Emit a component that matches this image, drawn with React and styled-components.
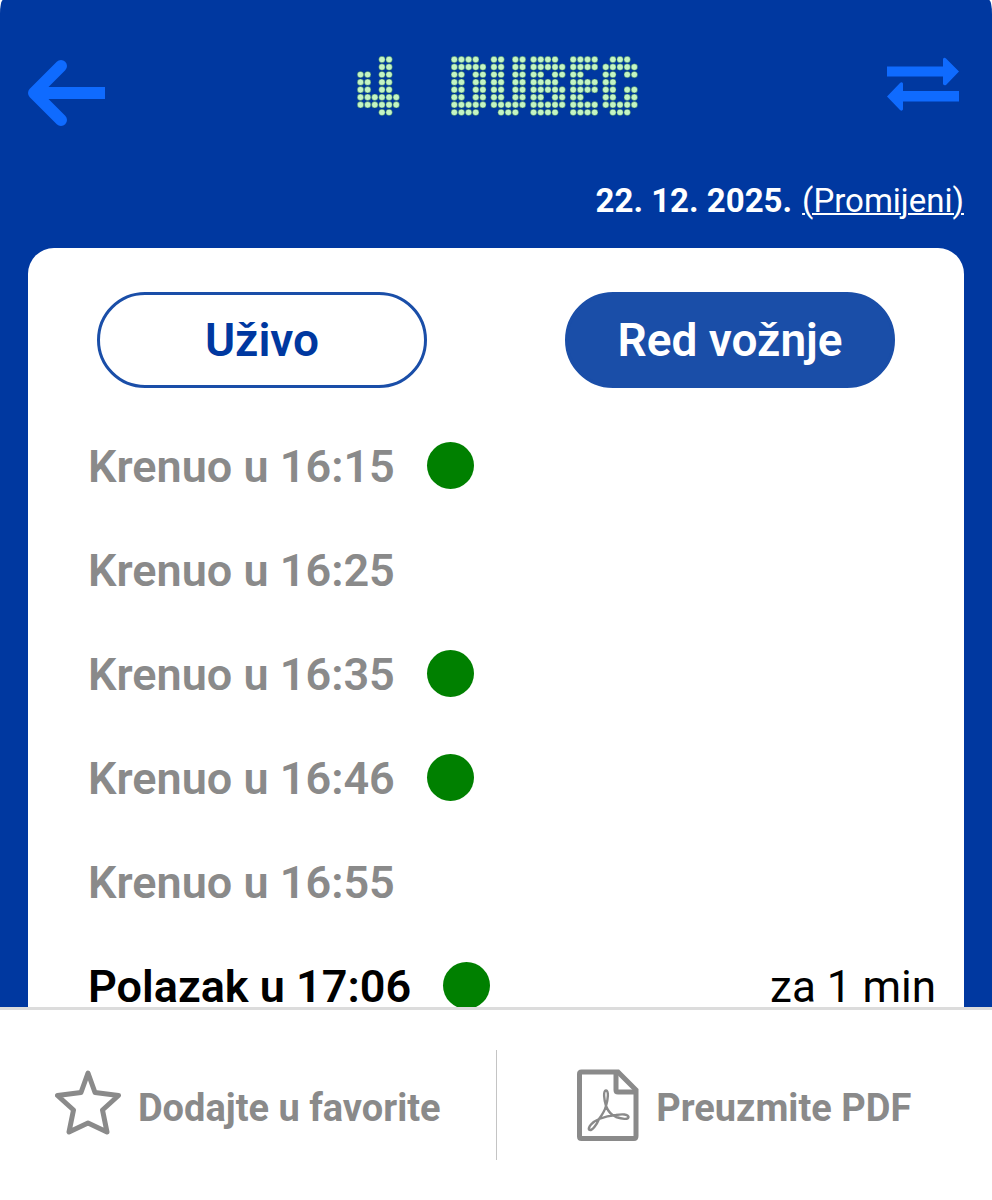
import React, { useState } from 'react';
import styled, { createGlobalStyle } from 'styled-components';

const GlobalStyle = createGlobalStyle`
  * {
    box-sizing: border-box;
  }

  body {
    margin: 0;
    background-color: #ffffff;
    font-family: Roboto, "Liberation Sans", sans-serif;
  }

  button {
    font-family: inherit;
    cursor: pointer;
  }
`;

const Page = styled.div`
  display: flex;
  flex-direction: column;
  height: 100vh;
`;

const Screen = styled.main`
  display: flex;
  flex-direction: column;
  flex: 1;
  min-height: 0;
  overflow: hidden;
  padding: 0 28px;
  background-color: #0038a0;
  border-radius: 3px 3px 0 0 / 14px 14px 0 0;
`;

const Header = styled.header`
  display: flex;
  flex-shrink: 0;
  align-items: center;
  justify-content: space-between;
  height: 172px;
`;

const IconButton = styled.button`
  display: flex;
  padding: 0;
  border: none;
  background: none;
  color: #0f6bff;
`;

const BackButton = styled(IconButton)`
  padding-top: 14px;
`;

const SwapButton = styled(IconButton)`
  padding: 0 5px 2px 0;
`;

const LineTitle = styled.h1`
  display: flex;
  margin: 0;
  padding-left: 6px;
`;

const DateBar = styled.div`
  display: flex;
  flex-shrink: 0;
  justify-content: flex-end;
  align-items: center;
  gap: 10px;
  height: 56px;
  margin-bottom: 20px;
  color: #ffffff;
  font-size: 33px;
`;

const ChangeLink = styled.a`
  color: inherit;
  text-decoration: underline;
  text-decoration-thickness: 2px;
`;

const Card = styled.section`
  flex: 1 0 auto;
  padding-top: 44px;
  background-color: #ffffff;
  border-radius: 26px 26px 0 0;
`;

const Tabs = styled.div`
  display: grid;
  grid-template-columns: 1fr 1fr;
  justify-items: center;
  margin-bottom: 25px;
`;

const TabButton = styled.button`
  width: 330px;
  height: 96px;
  border: 3px solid #1a4ea8;
  border-radius: 48px;
  background-color: ${(props) => (props.$active ? '#1a4ea8' : '#ffffff')};
  color: ${(props) => (props.$active ? '#ffffff' : '#0038a0')};
  font-size: 46px;
  font-weight: 600;
`;

const DepartureList = styled.ul`
  margin: 0;
  padding: 0 28px 0 60px;
  list-style: none;
`;

const Departure = styled.li`
  display: flex;
  align-items: center;
  height: 104px;
  color: ${(props) => (props.$departed ? '#8a8a8a' : '#000000')};
  font-size: 44px;
`;

const DepartureTime = styled.span`
  padding-top: 3px;
  font-size: 45px;
  font-weight: 600;
`;

const LiveDot = styled.span`
  width: 47px;
  height: 47px;
  margin-left: 32px;
  border-radius: 50%;
  background-color: #008000;
`;

const Remaining = styled.span`
  margin-left: auto;
  padding-top: 3px;
`;

const Footer = styled.footer`
  display: flex;
  flex-shrink: 0;
  align-items: center;
  height: 193px;
  padding-bottom: 1px;
  border-top: 3px solid #dcdcdc;
`;

const FooterButton = styled.button`
  display: flex;
  flex: 1;
  align-items: center;
  justify-content: center;
  gap: 17px;
  height: 110px;
  padding: 0;
  border: none;
  background: none;
  color: #8a8a8a;
  font-size: 38px;
  font-weight: 700;

  & + & {
    border-left: 1px solid #c4c4c4;
  }
`;

const FooterLabel = styled.span`
  padding-top: 6px;
`;

// dot patterns of the vehicle's LED display, 8 rows each
const LED = {
  4: ['...##.', '...##.', '##.##.', '##.##.', '##.##.', '######', '######', '...##.'],
  D: ['####.', '#####', '##.##', '##.##', '##.##', '##.##', '#####', '####.'],
  U: ['##.##', '##.##', '##.##', '##.##', '##.##', '##.##', '#####', '.###.'],
  B: ['####.', '#####', '##.##', '####.', '#####', '##.##', '#####', '####.'],
  E: ['####', '####', '##..', '####', '####', '##..', '####', '####'],
  C: ['.###.', '#####', '##.##', '##...', '##.##', '##.##', '#####', '.###.'],
};

const DOT_X = 7.15;
const DOT_Y = 7.55;
const LETTER_GAP = 3.9;
const SPACE = 47;

function LedDisplay({ text }) {
  const dots = [];
  let x = 3.5;

  text.split('').forEach((char, i) => {
    if (char === ' ') {
      x += SPACE;
      return;
    }
    LED[char].forEach((row, r) => {
      row.split('').forEach((cell, c) => {
        if (cell === '#') {
          dots.push(
            <circle key={`${i}-${r}-${c}`} cx={x + c * DOT_X} cy={3.5 + r * DOT_Y} r="3.2" />
          );
        }
      });
    });
    x += LED[char][0].length * DOT_X + LETTER_GAP;
  });

  return (
    <svg width={Math.round(x - LETTER_GAP)} height="60" fill="#c4f5c4" stroke="#14603f" strokeWidth="0.4" role="img" aria-label={text}>
      {dots}
    </svg>
  );
}

function BackIcon() {
  return (
    <svg width="78" height="68" viewBox="0 0 78 68" fill="none" stroke="currentColor" strokeWidth="12" aria-hidden="true">
      <path d="M33 7L6 34L33 61" strokeLinecap="round" strokeLinejoin="round" />
      <path d="M8 34H77" />
    </svg>
  );
}

function SwapIcon() {
  return (
    <svg width="72" height="56" viewBox="0 0 72 56" fill="currentColor" aria-hidden="true">
      <path d="M0 9.500H56V2Q57 0 59 1.500L72 14.500L59 28Q57 29 56 27V19.500H0Z" />
      <path d="M72 34H16V26.500Q15 24.500 13 26L0 39.500L13 53Q15 54.500 16 52.500V44.500H72Z" />
    </svg>
  );
}

function StarIcon() {
  return (
    <svg width="66" height="70" viewBox="0 0 66 70" fill="none" stroke="currentColor" strokeWidth="5" strokeLinejoin="round" aria-hidden="true">
      <path d="M33 3L40 22.500L63.500 25.500L47.500 40L52 62L33 53L14 62L18.500 40L2.500 25.500L26 22.500Z" />
    </svg>
  );
}

function PdfIcon() {
  return (
    <svg width="62" height="72" viewBox="0 0 62 72" fill="none" stroke="currentColor" aria-hidden="true">
      <path d="M4.500 3H41L59 21V67Q59 69.500 57 69.500H4.500Q2.500 69.500 2.500 67.500V5Q2.500 3 4.500 3Z" strokeWidth="5" />
      <path d="M39 3V21Q39 23 41 23H59" strokeWidth="5" />
      <path
        d="M29 37C27 30 26 22 29 21.500C32 22 31 30 29 37C31 42 34 46 39 48C45 50 51 51 51.500 48C51 45 45 45 39 46C33 46.500 27 48 22 50C15 53 11 58 12 60.500C15 63 20 55 22 50C25 46 28 41 29 37Z"
        strokeWidth="2.400"
        strokeLinejoin="round"
      />
    </svg>
  );
}

const departures = [
  { time: '16:15', departed: true, live: true },
  { time: '16:25', departed: true, live: false },
  { time: '16:35', departed: true, live: true },
  { time: '16:46', departed: true, live: true },
  { time: '16:55', departed: true, live: false },
  { time: '17:06', departed: false, live: true, remaining: 'za 1 min' },
];

function App() {
  const [tab, setTab] = useState('timetable');

  return (
    <Page>
      <GlobalStyle />
      <Screen>
        <Header>
          <BackButton type="button" aria-label="Natrag">
            <BackIcon />
          </BackButton>
          <LineTitle>
            <LedDisplay text="4 DUBEC" />
          </LineTitle>
          <SwapButton type="button" aria-label="Promijeni smjer">
            <SwapIcon />
          </SwapButton>
        </Header>
        <DateBar>
          <strong>22. 12. 2025.</strong>
          <ChangeLink href="#datum">(Promijeni)</ChangeLink>
        </DateBar>
        <Card>
          <Tabs>
            <TabButton type="button" $active={tab === 'live'} onClick={() => setTab('live')}>
              Uživo
            </TabButton>
            <TabButton type="button" $active={tab === 'timetable'} onClick={() => setTab('timetable')}>
              Red vožnje
            </TabButton>
          </Tabs>
          <DepartureList>
            {departures.map((item) => (
              <Departure key={item.time} $departed={item.departed}>
                <DepartureTime>
                  {item.departed ? 'Krenuo' : 'Polazak'} u {item.time}
                </DepartureTime>
                {item.live && <LiveDot />}
                {item.remaining && <Remaining>{item.remaining}</Remaining>}
              </Departure>
            ))}
          </DepartureList>
        </Card>
      </Screen>
      <Footer>
        <FooterButton type="button">
          <StarIcon />
          <FooterLabel>Dodajte u favorite</FooterLabel>
        </FooterButton>
        <FooterButton type="button">
          <PdfIcon />
          <FooterLabel>Preuzmite PDF</FooterLabel>
        </FooterButton>
      </Footer>
    </Page>
  );
}

export default App;
